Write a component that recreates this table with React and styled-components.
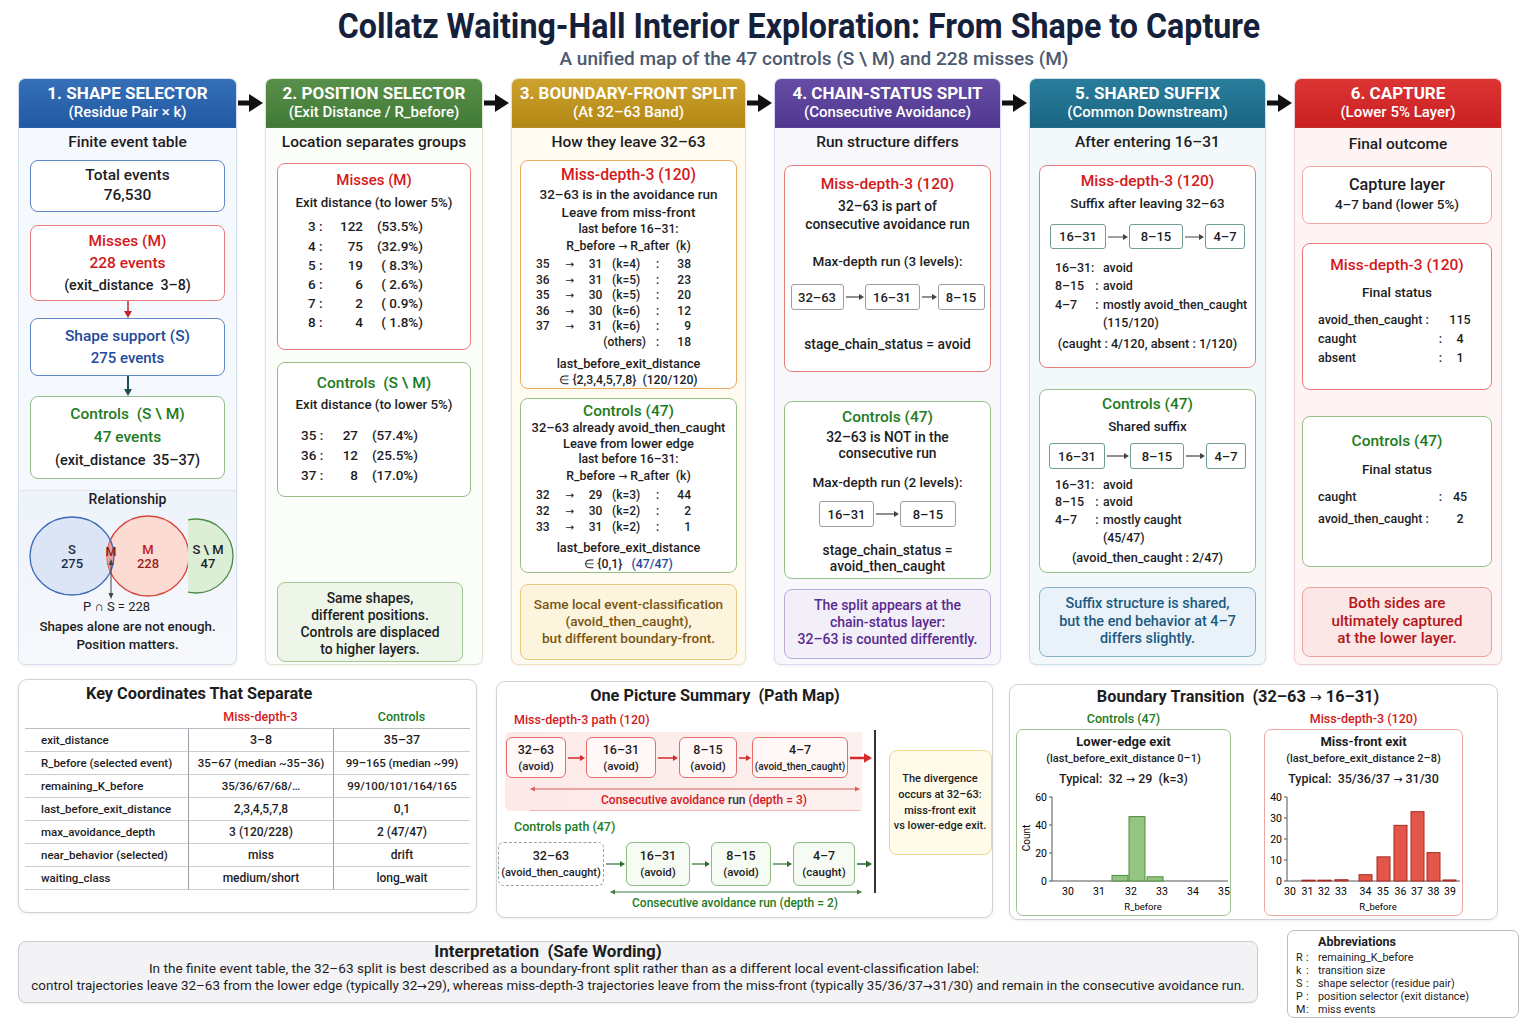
import React from 'react';
import styled, { createGlobalStyle } from 'styled-components';

const RED = '#d3191c';
const GREEN = '#1e7b21';
const BLUE = '#1f4b9b';
const INK = '#1d1d1f';

const RED_BD = '#e97b7b';
const GREEN_BD = '#96bf88';
const BLUE_BD = '#5d87c7';
const ORANGE_BD = '#eaaa62';

const GlobalStyle = createGlobalStyle`
  html, body { margin: 0; padding: 0; background: #fff; }
  body {
    font-family: Roboto, "Noto Sans", "Liberation Sans", sans-serif;
    color: ${INK};
  }
  * { box-sizing: border-box; }
`;

const Page = styled.div`
  width: 1536px;
  height: 1024px;
  overflow: hidden;
  position: relative;
`;

const Title = styled.h1`
  margin: 0;
  padding: 7px 0 0 62px;
  text-align: center;
  font-size: 35px;
  line-height: 40px;
  font-weight: 700;
  color: #15213b;
  white-space: nowrap;
  transform: scaleX(0.92);
  transform-origin: 799px 0;
`;

const Subtitle = styled.div`
  padding-left: 92px;
  text-align: center;
  font-size: 19px;
  line-height: 24px;
  font-weight: 500;
  color: #4b5a70;
  white-space: nowrap;
`;

/* arrow glyph: Roboto's arrow is tiny, DejaVu's reads like the reference */
const Arr = styled.span`
  font-family: "DejaVu Sans", sans-serif;
  font-size: 0.88em;
  font-weight: 400;
`;

/* ---------- six stage columns ---------- */

const Flow = styled.div`
  display: flex;
  margin: 7px 0 0 18px;
  height: 587px;
`;

const Column = styled.div`
  width: ${p => p.$w}px;
  flex: none;
  display: flex;
  flex-direction: column;
  background: ${p => p.$bg};
  border: 1px solid ${p => p.$bd};
  border-radius: 7px;
  overflow: hidden;
  box-shadow: 0 1px 3px rgba(0, 0, 0, 0.06);
`;

const Head = styled.div`
  height: 49px;
  flex: none;
  padding-top: 4px;
  text-align: center;
  color: #fff;
  background: linear-gradient(${p => p.$c2}, ${p => p.$c});
  border-bottom: 1px solid rgba(0, 0, 0, 0.12);
`;

const HeadMain = styled.div`
  font-size: 17px;
  line-height: 20px;
  font-weight: 700;
  white-space: nowrap;
`;

const HeadSub = styled.div`
  font-size: 15px;
  line-height: 19px;
  font-weight: 500;
  white-space: nowrap;
`;

const SubHead = styled.div`
  padding-top: ${p => p.$pt || 3}px;
  text-align: center;
  font-size: 15.5px;
  line-height: 22px;
  font-weight: 500;
  white-space: nowrap;
`;

const Body = styled.div`
  flex: 1;
  display: flex;
  flex-direction: column;
  padding: 0 ${p => p.$pr ?? p.$px}px 0 ${p => p.$px}px;
`;

const Box = styled.div`
  flex: none;
  margin-top: ${p => p.$mt || 0}px;
  margin-right: ${p => p.$mr || 0}px;
  height: ${p => p.$h}px;
  padding-top: ${p => p.$pt || 0}px;
  border: 1.5px solid ${p => p.$bd};
  background: ${p => p.$bg || '#fff'};
  border-radius: 8px;
  display: flex;
  flex-direction: column;
  align-items: center;
`;

const Txt = styled.div`
  font-size: ${p => p.$s || 12.5}px;
  line-height: ${p => p.$lh || 18}px;
  font-weight: ${p => p.$w || 500};
  color: ${p => p.$c || INK};
  margin-top: ${p => p.$mt || 0}px;
  padding-right: ${p => p.$pr || 0}px;
  text-align: center;
  white-space: nowrap;
`;

const Accent = styled.span`
  color: ${p => p.$c};
`;

const DownArrowWrap = styled.div`
  height: ${p => p.$h}px;
  display: flex;
  justify-content: center;
`;

const DownArrow = ({ h, c, sw }) => (
  <DownArrowWrap $h={h}>
    <svg width="12" height={h} viewBox={`0 0 12 ${h}`}>
      <line x1="6" y1="0" x2="6" y2={h - 4} stroke={c} strokeWidth={sw} />
      <polygon points={`6,${h} 2,${h - 7} 10,${h - 7}`} fill={c} />
    </svg>
  </DownArrowWrap>
);

const FlowArrowWrap = styled.div`
  width: 28px;
  flex: none;
  padding-top: 15px;
`;

const FlowArrow = () => (
  <FlowArrowWrap>
    <svg width="28" height="20" viewBox="0 0 28 20">
      <rect x="1" y="7.5" width="14" height="5" fill="#111" />
      <polygon points="12,1 26,10 12,19" fill="#111" />
    </svg>
  </FlowArrowWrap>
);

const Rel = styled.div`
  margin: 11px -11px 0;
  height: 172px;
  background: linear-gradient(#eef3fa, #f6f8fc);
  border-top: 1px solid #dfe6f1;
  display: flex;
  flex-direction: column;
  align-items: center;
`;

const Venn = () => (
  <svg width="219" height="92" viewBox="0 0 219 92">
    <defs>
      <clipPath id="clipS">
        <ellipse cx="54" cy="49" rx="42" ry="39" />
      </clipPath>
      <clipPath id="clipRight">
        <rect x="170" y="0" width="60" height="92" />
      </clipPath>
    </defs>
    <ellipse cx="54" cy="49" rx="42" ry="39" fill="#dbe5f6" />
    <ellipse cx="130" cy="49" rx="41" ry="40" fill="#fcdcd2" stroke="#d9443c" strokeWidth="1.3" />
    <ellipse cx="130" cy="49" rx="41" ry="40" fill="#e6a3a0" clipPath="url(#clipS)" />
    <ellipse cx="54" cy="49" rx="42" ry="39" fill="none" stroke="#3b68b8" strokeWidth="1.3" />
    <g clipPath="url(#clipRight)">
      <circle cx="178" cy="49" r="37" fill="#dcefd6" stroke="#4b8c45" strokeWidth="1.3" />
    </g>
    <g fontSize="13" fontWeight="500" textAnchor="middle">
      <text x="54" y="46.5" fill="#1d2a44">S</text>
      <text x="54" y="61" fill="#1d2a44">275</text>
      <text x="130" y="46.5" fill="#c0201a">M</text>
      <text x="130" y="61" fill="#9a1f18">228</text>
      <text x="190" y="46.5" fill="#1d1d1f">S \ M</text>
      <text x="190" y="61" fill="#1d1d1f">47</text>
      <text x="93" y="48.5" fill="#8a1a1a" fontSize="12.5">M</text>
    </g>
    <line x1="93" y1="56" x2="93" y2="88" stroke="#444" strokeWidth="1" />
    <polygon points="93,52 90.5,58 95.5,58" fill="#444" />
    <polygon points="93,92 90.5,86 95.5,86" fill="#444" />
  </svg>
);

/* exit-distance tables of column 2 */
const ExitRows = styled.div`
  align-self: stretch;
  margin-top: ${p => p.$mt || 0}px;
  padding-left: ${p => p.$pl}px;
  display: grid;
  grid-template-columns: ${p => p.$cols};
  grid-auto-rows: ${p => p.$lh}px;
  line-height: ${p => p.$lh}px;
  font-size: 13.5px;
  font-weight: 500;
  white-space: pre;
`;

const Cell = styled.span`
  text-align: ${p => p.$a || 'left'};
  grid-column: ${p => (p.$span ? `span ${p.$span}` : 'auto')};
`;

/* R_before -> R_after tables of column 3 */
const ArrRows = styled.div`
  align-self: stretch;
  margin-top: ${p => p.$mt || 0}px;
  padding-left: 15px;
  display: grid;
  grid-template-columns: 25px 18px 33px 34px 23px 22px;
  grid-auto-rows: ${p => p.$lh}px;
  line-height: ${p => p.$lh}px;
  font-size: 12px;
  font-weight: 500;
  white-space: nowrap;
`;

const ArrRow = ({ a, b, k, n }) => (
  <>
    <Cell>{a}</Cell>
    <Cell $a="center"><Arr>→</Arr></Cell>
    <Cell $a="center">{b}</Cell>
    <Cell>(k={k})</Cell>
    <Cell $a="center">:</Cell>
    <Cell $a="right">{n}</Cell>
  </>
);

/* chains of band boxes */
const Chain = styled.div`
  margin-top: ${p => p.$mt || 0}px;
  height: ${p => p.$h}px;
  display: flex;
  align-items: center;
  justify-content: center;
  flex: none;
`;

const Band = styled.div`
  width: ${p => p.$w}px;
  height: 100%;
  border: 1.3px solid ${p => p.$bd};
  border-radius: 3px;
  background: #fff;
  display: flex;
  align-items: center;
  justify-content: center;
  font-size: 13px;
  font-weight: 500;
`;

const SmallArrow = ({ w = 20, c = '#444', sw = 1.2, head = 5 }) => (
  <svg width={w} height="14" viewBox={`0 0 ${w} 14`} style={{ flex: 'none' }}>
    <line x1="2" y1="7" x2={w - 3} y2="7" stroke={c} strokeWidth={sw} />
    <polygon points={`${w - 1},7 ${w - 1 - head},${7 - head * 0.6} ${w - 1 - head},${7 + head * 0.6}`} fill={c} />
  </svg>
);

/* status list of column 5 */
const SList = styled.div`
  align-self: stretch;
  margin-top: ${p => p.$mt || 0}px;
  padding-left: 15px;
  display: grid;
  grid-template-columns: 36px 12px auto;
  grid-auto-rows: ${p => p.$lh}px;
  line-height: ${p => p.$lh}px;
  font-size: 12.4px;
  font-weight: 500;
  white-space: nowrap;
`;

/* final status rows of column 6 */
const FRows = styled.div`
  align-self: stretch;
  margin-top: ${p => p.$mt || 0}px;
  padding-left: 15px;
  display: grid;
  grid-template-columns: 114px 10px 36px;
  grid-auto-rows: ${p => p.$lh}px;
  line-height: ${p => p.$lh}px;
  font-size: 12.5px;
  font-weight: 500;
  white-space: nowrap;
`;

/* ---------- bottom panels ---------- */

const BottomRow = styled.div`
  display: flex;
  align-items: flex-start;
  margin: 14px 0 0 18px;
`;

const Panel = styled.div`
  flex: none;
  width: ${p => p.$w}px;
  height: ${p => p.$h}px;
  margin-top: ${p => p.$mt || 0}px;
  margin-left: ${p => p.$ml || 0}px;
  border: 1px solid #cfd2d8;
  border-radius: 9px;
  background: #fff;
  box-shadow: 0 1px 3px rgba(0, 0, 0, 0.07);
`;

const PanelTitle = styled.div`
  padding: ${p => p.$pt || 4}px ${p => p.$pr || 0}px 0 ${p => p.$pl || 0}px;
  text-align: ${p => p.$align || 'center'};
  font-size: 16.3px;
  line-height: 20px;
  font-weight: 700;
  white-space: nowrap;
`;

const KTable = styled.div`
  margin: 3px 6px 0;
  display: grid;
  grid-template-columns: 163px 145px 137px;
`;

const KHead = styled.div`
  height: 22px;
  line-height: 20px;
  text-align: center;
  font-size: 12.5px;
  font-weight: 500;
  color: ${p => p.$c};
  border-bottom: 1px solid #b9bcc2;
`;

const KCell = styled.div`
  height: 23px;
  line-height: 22px;
  font-size: ${p => p.$s || 11.5}px;
  font-weight: 500;
  white-space: nowrap;
  border-bottom: 1px solid #c9ccd1;
  border-left: ${p => (p.$first ? 'none' : '1px solid #9a9ea6')};
  text-align: ${p => (p.$first ? 'left' : 'center')};
  padding-left: ${p => (p.$first ? 16 : 0)}px;
`;

const PMBody = styled.div`
  display: flex;
  align-items: flex-start;
`;

const PMDiagram = styled.div`
  width: 376px;
  margin-left: 1px;
  flex: none;
`;

const PathLabel = styled.div`
  margin-top: ${p => p.$mt}px;
  padding-left: 16px;
  font-size: 12.5px;
  line-height: 16px;
  font-weight: 500;
  color: ${p => p.$c};
`;

const RedArea = styled.div`
  margin: 4px 0 0 7px;
  width: 368px;
  padding-top: 5px;
  border-radius: 6px;
  background: linear-gradient(to right, rgba(251, 226, 224, 0.75) 0, rgba(252, 236, 234, 0.75) 357px, transparent 357px);
`;

const NodeRow = styled.div`
  display: flex;
  align-items: center;
  margin-top: ${p => p.$mt || 0}px;
  margin-left: ${p => p.$ml || 0}px;
  height: ${p => p.$h}px;
`;

const PNode = styled.div`
  flex: none;
  width: ${p => p.$w}px;
  height: 100%;
  border: 1.4px ${p => (p.$dashed ? 'dashed' : 'solid')} ${p => p.$bd};
  background: ${p => p.$bg};
  border-radius: 6px;
  display: flex;
  flex-direction: column;
  align-items: center;
  justify-content: center;
  white-space: nowrap;
`;

const NodeTop = styled.div`
  font-size: 12.5px;
  line-height: 17px;
  font-weight: 500;
`;

const NodeSub = styled.div`
  font-size: ${p => p.$s || 11.5}px;
  line-height: 17px;
  font-weight: 500;
`;

const RangeWrap = styled.div`
  margin: ${p => p.$mt}px 0 0 ${p => p.$ml}px;
  height: 8px;
  display: flex;
`;

const Range = ({ w, ml, mt, c }) => (
  <RangeWrap $ml={ml} $mt={mt}>
    <svg width={w} height="8" viewBox={`0 0 ${w} 8`}>
      <line x1="1" y1="4" x2={w - 1} y2="4" stroke={c} strokeWidth="1" />
      <polygon points={`0,4 5,1.5 5,6.5`} fill={c} />
      <polygon points={`${w},4 ${w - 5},1.5 ${w - 5},6.5`} fill={c} />
    </svg>
  </RangeWrap>
);

const RangeLabel = styled.div`
  padding-left: ${p => p.$pl}px;
  text-align: center;
  font-size: 12px;
  line-height: 14px;
  font-weight: 500;
  color: ${p => p.$c};
  white-space: nowrap;
`;

const RangeLine = styled.div`
  margin: 3px 0 0 25px;
  width: 330px;
  height: 1px;
  background: #f0b4b4;
`;

const Divider = styled.div`
  flex: none;
  width: 1.5px;
  height: 163px;
  margin-top: 24px;
  background: #333;
`;

const SideNote = styled.div`
  flex: none;
  width: 103px;
  height: 105px;
  margin: 44px 0 0 13px;
  border: 1.3px solid #efd58c;
  border-radius: 8px;
  background: #fffbea;
  display: flex;
  flex-direction: column;
  justify-content: center;
  align-items: center;
  font-size: 11px;
  line-height: 15.6px;
  font-weight: 500;
  white-space: nowrap;
`;

const ChartLabels = styled.div`
  margin: 4px 0 0 6px;
  display: grid;
  grid-template-columns: 215px 199px;
  column-gap: 33px;
`;

const ChartLabel = styled.div`
  text-align: center;
  font-size: 12.5px;
  line-height: 16px;
  font-weight: 500;
  color: ${p => p.$c};
`;

const ChartCards = styled.div`
  margin: 2px 0 0 6px;
  display: grid;
  grid-template-columns: 215px 199px;
  column-gap: 33px;
`;

const ChartCard = styled.div`
  height: 187px;
  border: 1.3px solid ${p => p.$bd};
  border-radius: 7px;
  padding-top: 3px;
  display: flex;
  flex-direction: column;
  align-items: center;
`;

const GreenChart = () => {
  const ticks = [[60, 4], [40, 32], [20, 60], [0, 88]];
  const xl = [[30, 51], [31, 82], [32, 114], [33, 145], [34, 176], [35, 207]];
  const bars = [[95, 4], [112, 46], [130, 3]];
  return (
    <svg width="213" height="124" viewBox="0 0 213 124">
      <g transform="translate(0 3)">
        <line x1="35" y1="4" x2="35" y2="88" stroke="#555" strokeWidth="1" />
        <line x1="35" y1="88" x2="211" y2="88" stroke="#555" strokeWidth="1" />
        {ticks.map(([v, y]) => (
          <g key={v}>
            <line x1="32" y1={y} x2="35" y2={y} stroke="#555" />
            <text x="30" y={y + 3.5} textAnchor="end" fontSize="10.5">{v}</text>
          </g>
        ))}
        {bars.map(([x, v]) => (
          <rect key={x} x={x} y={88 - v * 1.4} width="16" height={v * 1.4} fill="#94c582" stroke="#4f8b42" strokeWidth="1" />
        ))}
        {xl.map(([v, x]) => (
          <text key={v} x={x} y="101.5" textAnchor="middle" fontSize="10.5">{v}</text>
        ))}
        <text x="126" y="117" textAnchor="middle" fontSize="9.5">R_before</text>
        <text x="13" y="45" textAnchor="middle" fontSize="10" transform="rotate(-90 13 45)">Count</text>
      </g>
    </svg>
  );
};

const RedChart = () => {
  const ticks = [[40, 4], [30, 25], [20, 46], [10, 67], [0, 88]];
  const xl = [[30, 25], [31, 42.5], [32, 59], [33, 76], [34, 100.5], [35, 118], [36, 135.5], [37, 152], [38, 168.5], [39, 185]];
  const bars = [[37, 0.4], [53, 0.4], [70, 0.6], [94, 3], [112, 11.5], [129, 26.5], [146, 33], [162, 13.5], [178, 0.5]];
  return (
    <svg width="197" height="124" viewBox="0 0 197 124">
      <g transform="translate(0 3)">
        <line x1="22" y1="4" x2="22" y2="88" stroke="#555" strokeWidth="1" />
        <line x1="22" y1="88" x2="195" y2="88" stroke="#555" strokeWidth="1" />
        {ticks.map(([v, y]) => (
          <g key={v}>
            <line x1="19" y1={y} x2="22" y2={y} stroke="#555" />
            <text x="17" y={y + 3.5} textAnchor="end" fontSize="10.5">{v}</text>
          </g>
        ))}
        {bars.map(([x, v]) => (
          <rect key={x} x={x} y={88 - v * 2.1} width="13" height={v * 2.1} fill="#e2574a" stroke="#a82a20" strokeWidth="1" />
        ))}
        {xl.map(([v, x]) => (
          <text key={v} x={x} y="101.5" textAnchor="middle" fontSize="10.5">{v}</text>
        ))}
        <text x="113" y="117" textAnchor="middle" fontSize="9.5">R_before</text>
      </g>
    </svg>
  );
};

const FootRow = styled.div`
  display: flex;
  align-items: flex-start;
  margin: 10px 0 0 18px;
`;

const Interp = styled.div`
  flex: none;
  width: 1240px;
  height: 62px;
  margin-top: 11px;
  border: 1px solid #c9ccd2;
  border-radius: 8px;
  background: #f3f3f5;
  box-shadow: 0 1px 2px rgba(0, 0, 0, 0.06);
  text-align: center;
  white-space: nowrap;
`;

const InterpTitle = styled.div`
  padding-right: 180px;
  font-size: 17px;
  line-height: 18px;
  font-weight: 700;
`;

const InterpLine = styled.div`
  padding-right: ${p => p.$pr || 0}px;
  font-size: ${p => p.$s}px;
  line-height: 17px;
`;

const Abbrev = styled.div`
  flex: none;
  width: 232px;
  height: 88px;
  margin-left: 29px;
  border: 1px solid #b9bcc3;
  border-radius: 7px;
  background: #fff;
  padding: 3px 0 0 8px;
`;

const AbbrevTitle = styled.div`
  padding-left: 22px;
  font-size: 12.5px;
  line-height: 15px;
  font-weight: 700;
`;

const AbbrevList = styled.div`
  margin-top: 2px;
  display: grid;
  grid-template-columns: 10px 12px auto;
  grid-auto-rows: 13px;
  line-height: 13px;
  font-size: 10.8px;
  white-space: nowrap;
`;

const keyRows = [
  ['exit_distance', '3–8', '35–37', 12.5],
  ['R_before (selected event)', '35–67 (median ~35–36)', '99–165 (median ~99)'],
  ['remaining_K_before', '35/36/67/68/…', '99/100/101/164/165'],
  ['last_before_exit_distance', '2,3,4,5,7,8', '0,1', 12],
  ['max_avoidance_depth', '3 (120/228)', '2 (47/47)', 12],
  ['near_behavior (selected)', 'miss', 'drift', 12],
  ['waiting_class', 'medium/short', 'long_wait', 12],
];

const abbrevs = [
  ['R', 'remaining_K_before'],
  ['k', 'transition size'],
  ['S', 'shape selector (residue pair)'],
  ['P', 'position selector (exit distance)'],
  ['M', 'miss events'],
];

const App = () => {
  return (
    <Page>
      <GlobalStyle />
      <Title>Collatz Waiting-Hall Interior Exploration: From Shape to Capture</Title>
      <Subtitle>A unified map of the 47 controls (S \ M) and 228 misses (M)</Subtitle>

      <Flow>
        {/* 1 */}
        <Column $w={219} $bg="#f5f8fd" $bd="#d3ddee">
          <Head $c="#2259a3" $c2="#3470b8">
            <HeadMain>1. SHAPE SELECTOR</HeadMain>
            <HeadSub>(Residue Pair × k)</HeadSub>
          </Head>
          <SubHead>Finite event table</SubHead>
          <Body $px={11}>
            <Box $mt={7} $h={52} $pt={4} $bd={BLUE_BD}>
              <Txt $s={15.5} $lh={20}>Total events</Txt>
              <Txt $s={15.5} $lh={20}>76,530</Txt>
            </Box>
            <Box $mt={13} $h={76} $pt={4} $bd={RED_BD}>
              <Txt $s={15.5} $lh={22} $c={RED}>Misses (M)</Txt>
              <Txt $s={15.5} $lh={22} $c={RED}>228 events</Txt>
              <Txt $s={14.3} $lh={22}>(exit_distance&nbsp; 3–8)</Txt>
            </Box>
            <DownArrow h={17} c="#c0282a" sw={1.5} />
            <Box $h={58} $pt={6} $bd={BLUE_BD}>
              <Txt $s={15.5} $lh={22} $c={BLUE}>Shape support (S)</Txt>
              <Txt $s={15} $lh={22} $c={BLUE}>275 events</Txt>
            </Box>
            <DownArrow h={20} c="#1e4b4f" sw={2} />
            <Box $h={83} $pt={5.5} $bd={GREEN_BD}>
              <Txt $s={15.5} $lh={23} $c={GREEN}>Controls&nbsp; (S \ M)</Txt>
              <Txt $s={15.5} $lh={23} $c={GREEN}>47 events</Txt>
              <Txt $s={14.5} $lh={23}>(exit_distance&nbsp; 35–37)</Txt>
            </Box>
            <Rel>
              <Txt $s={14} $lh={16}>Relationship</Txt>
              <Venn />
              <Txt $s={13} $lh={16} $w={400} $pr={22}>P ∩ S = 228</Txt>
              <Txt $s={13.3} $lh={18} $mt={3}>Shapes alone are not enough.</Txt>
              <Txt $s={13.3} $lh={18}>Position matters.</Txt>
            </Rel>
          </Body>
        </Column>

        <FlowArrow />

        {/* 2 */}
        <Column $w={218} $bg="#fbfdf9" $bd="#dbe6d3">
          <Head $c="#417a36" $c2="#58904a">
            <HeadMain>2. POSITION SELECTOR</HeadMain>
            <HeadSub>(Exit Distance / R_before)</HeadSub>
          </Head>
          <SubHead>Location separates groups</SubHead>
          <Body $px={11}>
            <Box $mt={10} $h={187} $pt={6} $bd={RED_BD}>
              <Txt $s={15} $lh={20} $c={RED}>Misses (M)</Txt>
              <Txt $s={13.3} $lh={20} $mt={3}>Exit distance (to lower 5%)</Txt>
              <ExitRows $mt={4.4} $lh={19.2} $pl={30} $cols="24px 31px 8px 52px">
                {[['3 :', '122', '(53.5%)'], ['4 :', '75', '(32.9%)'], ['5 :', '19', '( 8.3%)'], ['6 :', '6', '( 2.6%)'], ['7 :', '2', '( 0.9%)'], ['8 :', '4', '( 1.8%)']].map(r => (
                  <React.Fragment key={r[0]}>
                    <Cell>{r[0]}</Cell>
                    <Cell $a="right">{r[1]}</Cell>
                    <Cell />
                    <Cell $a="right">{r[2]}</Cell>
                  </React.Fragment>
                ))}
              </ExitRows>
            </Box>
            <Box $mt={12} $h={135} $pt={10} $bd={GREEN_BD}>
              <Txt $s={15.5} $lh={20} $c={GREEN}>Controls&nbsp; (S \ M)</Txt>
              <Txt $s={13.3} $lh={20} $mt={2}>Exit distance (to lower 5%)</Txt>
              <ExitRows $mt={10} $lh={20} $pl={23} $cols="30px 27px 9px 51px">
                {[['35 :', '27', '(57.4%)'], ['36 :', '12', '(25.5%)'], ['37 :', '8', '(17.0%)']].map(r => (
                  <React.Fragment key={r[0]}>
                    <Cell>{r[0]}</Cell>
                    <Cell $a="right">{r[1]}</Cell>
                    <Cell />
                    <Cell $a="right">{r[2]}</Cell>
                  </React.Fragment>
                ))}
              </ExitRows>
            </Box>
            <Box $mt={85} $h={80} $mr={8} $pt={6.5} $bd="#a2c994" $bg="#eef6ea">
              <Txt $s={13.9} $lh={17}>Same shapes,</Txt>
              <Txt $s={13.9} $lh={17}>different positions.</Txt>
              <Txt $s={13.9} $lh={17}>Controls are displaced</Txt>
              <Txt $s={13.9} $lh={17}>to higher layers.</Txt>
            </Box>
          </Body>
        </Column>

        <FlowArrow />

        {/* 3 */}
        <Column $w={235} $bg="#fffbf1" $bd="#efe0b8">
          <Head $c="#b38714" $c2="#cda22e">
            <HeadMain>3. BOUNDARY-FRONT SPLIT</HeadMain>
            <HeadSub>(At 32–63 Band)</HeadSub>
          </Head>
          <SubHead>How they leave 32–63</SubHead>
          <Body $px={8}>
            <Box $mt={7} $h={229} $pt={5} $bd={ORANGE_BD}>
              <Txt $s={15.7} $lh={18} $c={RED}>Miss-depth-3 (120)</Txt>
              <Txt $s={13.5} $lh={18} $mt={1}>32–63 is in the avoidance run</Txt>
              <Txt $s={13.5} $lh={18}>Leave from miss-front</Txt>
              <Txt $s={12.2} $lh={17}>last before 16–31:</Txt>
              <Txt $s={12.3} $lh={16.5}>R_before <Arr>→</Arr> R_after&nbsp; (k)</Txt>
              <ArrRows $mt={1.5} $lh={15.6}>
                <ArrRow a="35" b="31" k="4" n="38" />
                <ArrRow a="36" b="31" k="5" n="23" />
                <ArrRow a="35" b="30" k="5" n="20" />
                <ArrRow a="36" b="30" k="6" n="12" />
                <ArrRow a="37" b="31" k="6" n="9" />
                <Cell $span={4} $a="right">(others)</Cell>
                <Cell $a="center">:</Cell>
                <Cell $a="right">18</Cell>
              </ArrRows>
              <Txt $s={12.7} $lh={17} $mt={4.5}>last_before_exit_distance</Txt>
              <Txt $s={12.3} $lh={17}>∈ {'{2,3,4,5,7,8}'}&nbsp; (120/120)</Txt>
            </Box>
            <Box $mt={9} $h={175} $pt={3} $bd={GREEN_BD}>
              <Txt $s={15.5} $lh={18} $c={GREEN}>Controls (47)</Txt>
              <Txt $s={12.9} $lh={16}>32–63 already avoid_then_caught</Txt>
              <Txt $s={12.9} $lh={15}>Leave from lower edge</Txt>
              <Txt $s={12.2} $lh={17}>last before 16–31:</Txt>
              <Txt $s={12.3} $lh={16}>R_before <Arr>→</Arr> R_after&nbsp; (k)</Txt>
              <ArrRows $mt={2} $lh={16}>
                <ArrRow a="32" b="29" k="3" n="44" />
                <ArrRow a="32" b="30" k="2" n="2" />
                <ArrRow a="33" b="31" k="2" n="1" />
              </ArrRows>
              <Txt $s={12.7} $lh={16} $mt={5}>last_before_exit_distance</Txt>
              <Txt $s={12.3} $lh={16}>∈ {'{0,1}'}&nbsp;&nbsp; <Accent $c={BLUE}>(47/47)</Accent></Txt>
            </Box>
            <Box $mt={11} $h={76} $pt={10.5} $bd="#e9c77c" $bg="#fdf4dd">
              <Txt $s={13.6} $lh={17} $c="#7a5512">Same local event-classification</Txt>
              <Txt $s={13.6} $lh={17} $c="#7a5512">(avoid_then_caught),</Txt>
              <Txt $s={13.6} $lh={17} $c="#7a5512">but different boundary-front.</Txt>
            </Box>
          </Body>
        </Column>

        <FlowArrow />

        {/* 4 */}
        <Column $w={227} $bg="#f8f7fc" $bd="#dedaee">
          <Head $c="#503891" $c2="#664ca4">
            <HeadMain>4. CHAIN-STATUS SPLIT</HeadMain>
            <HeadSub>(Consecutive Avoidance)</HeadSub>
          </Head>
          <SubHead>Run structure differs</SubHead>
          <Body $px={9}>
            <Box $mt={12} $h={207} $pt={8} $bd={RED_BD}>
              <Txt $s={15.5} $lh={20} $c={RED}>Miss-depth-3 (120)</Txt>
              <Txt $s={13.8} $lh={18} $mt={3}>32–63 is part of</Txt>
              <Txt $s={13.8} $lh={18}>consecutive avoidance run</Txt>
              <Txt $s={13.5} $lh={18} $mt={19}>Max-depth run (3 levels):</Txt>
              <Chain $mt={14} $h={26}>
                <Band $w={53} $bd="#9d9d9d">32–63</Band>
                <SmallArrow w={21} c="#444" />
                <Band $w={55} $bd="#9d9d9d">16–31</Band>
                <SmallArrow w={18} c="#444" />
                <Band $w={47} $bd="#9d9d9d">8–15</Band>
              </Chain>
              <Txt $s={13.8} $lh={18} $mt={25}>stage_chain_status = avoid</Txt>
            </Box>
            <Box $mt={29} $h={178} $pt={6} $bd={GREEN_BD}>
              <Txt $s={15.5} $lh={18} $c={GREEN}>Controls (47)</Txt>
              <Txt $s={13.8} $lh={16} $mt={3}>32–63 is NOT in the</Txt>
              <Txt $s={13.8} $lh={16}>consecutive run</Txt>
              <Txt $s={13.5} $lh={18} $mt={12}>Max-depth run (2 levels):</Txt>
              <Chain $mt={10} $h={26}>
                <Band $w={55} $bd="#9d9d9d">16–31</Band>
                <SmallArrow w={26} c="#444" />
                <Band $w={56} $bd="#9d9d9d">8–15</Band>
              </Chain>
              <Txt $s={13.8} $lh={16} $mt={15}>stage_chain_status =</Txt>
              <Txt $s={13.8} $lh={16}>avoid_then_caught</Txt>
            </Box>
            <Box $mt={10} $h={70} $pt={6.5} $bd="#bba9dc" $bg="#f3eff9">
              <Txt $s={14} $lh={17} $c="#5a2b90">The split appears at the</Txt>
              <Txt $s={14} $lh={17} $c="#5a2b90">chain-status layer:</Txt>
              <Txt $s={14} $lh={17} $c="#5a2b90">32–63 is counted differently.</Txt>
            </Box>
          </Body>
        </Column>

        <FlowArrow />

        {/* 5 */}
        <Column $w={237} $bg="#f3f8fb" $bd="#cfdfea">
          <Head $c="#1a6683" $c2="#2a7d9c">
            <HeadMain>5. SHARED SUFFIX</HeadMain>
            <HeadSub>(Common Downstream)</HeadSub>
          </Head>
          <SubHead>After entering 16–31</SubHead>
          <Body $px={9}>
            <Box $mt={12} $h={203} $pt={6} $bd={RED_BD}>
              <Txt $s={15.5} $lh={18} $c={RED}>Miss-depth-3 (120)</Txt>
              <Txt $s={13.4} $lh={18} $mt={5}>Suffix after leaving 32–63</Txt>
              <Chain $mt={11} $h={25}>
                <Band $w={56} $bd="#6f9b96">16–31</Band>
                <SmallArrow w={23} c="#444" />
                <Band $w={54} $bd="#6f9b96">8–15</Band>
                <SmallArrow w={22} c="#444" />
                <Band $w={40} $bd="#6f9b96">4–7</Band>
              </Chain>
              <SList $mt={10} $lh={18.3}>
                <Cell>16–31</Cell><Cell>:</Cell><Cell>avoid</Cell>
                <Cell>8–15</Cell><Cell $a="center">:</Cell><Cell>avoid</Cell>
                <Cell>4–7</Cell><Cell $a="center">:</Cell><Cell>mostly avoid_then_caught</Cell>
                <Cell /><Cell /><Cell>(115/120)</Cell>
              </SList>
              <Txt $s={12.7} $lh={18} $mt={3}>(caught : 4/120, absent : 1/120)</Txt>
            </Box>
            <Box $mt={21} $h={184} $pt={5} $bd={GREEN_BD}>
              <Txt $s={15.5} $lh={18} $c={GREEN}>Controls (47)</Txt>
              <Txt $s={13.4} $lh={18} $mt={5}>Shared suffix</Txt>
              <Chain $mt={7} $h={26}>
                <Band $w={56} $bd="#6f9b96">16–31</Band>
                <SmallArrow w={25} c="#444" />
                <Band $w={54} $bd="#6f9b96">8–15</Band>
                <SmallArrow w={22} c="#444" />
                <Band $w={40} $bd="#6f9b96">4–7</Band>
              </Chain>
              <SList $mt={6.5} $lh={17.7}>
                <Cell>16–31</Cell><Cell>:</Cell><Cell>avoid</Cell>
                <Cell>8–15</Cell><Cell $a="center">:</Cell><Cell>avoid</Cell>
                <Cell>4–7</Cell><Cell $a="center">:</Cell><Cell>mostly caught</Cell>
                <Cell /><Cell /><Cell>(45/47)</Cell>
              </SList>
              <Txt $s={12.7} $lh={18} $mt={2.5}>(avoid_then_caught : 2/47)</Txt>
            </Box>
            <Box $mt={14} $h={70} $pt={7} $bd="#84b3cb" $bg="#e9f2f8">
              <Txt $s={14.4} $lh={17.5} $c="#1b5a82">Suffix structure is shared,</Txt>
              <Txt $s={14.4} $lh={17.5} $c="#1b5a82">but the end behavior at 4–7</Txt>
              <Txt $s={14.4} $lh={17.5} $c="#1b5a82">differs slightly.</Txt>
            </Box>
          </Body>
        </Column>

        <FlowArrow />

        {/* 6 */}
        <Column $w={208} $bg="#fdf4f3" $bd="#f2d0cf">
          <Head $c="#c91f22" $c2="#dc3533">
            <HeadMain>6. CAPTURE</HeadMain>
            <HeadSub>(Lower 5% Layer)</HeadSub>
          </Head>
          <SubHead $pt={5}>Final outcome</SubHead>
          <Body $px={7} $pr={9}>
            <Box $mt={11} $h={58} $pt={8} $bd="#f0a9a8">
              <Txt $s={16.2} $lh={20}>Capture layer</Txt>
              <Txt $s={13.5} $lh={18}>4–7 band (lower 5%)</Txt>
            </Box>
            <Box $mt={19} $h={147} $pt={11} $bd={RED_BD}>
              <Txt $s={15.5} $lh={20} $c={RED}>Miss-depth-3 (120)</Txt>
              <Txt $s={13.5} $lh={18} $mt={8}>Final status</Txt>
              <FRows $mt={8.5} $lh={19}>
                <Cell>avoid_then_caught :</Cell><Cell /><Cell $a="center">115</Cell>
                <Cell>caught</Cell><Cell $a="right">:</Cell><Cell $a="center">4</Cell>
                <Cell>absent</Cell><Cell $a="right">:</Cell><Cell $a="center">1</Cell>
              </FRows>
            </Box>
            <Box $mt={26} $h={151} $pt={14} $bd={GREEN_BD}>
              <Txt $s={15.5} $lh={20} $c={GREEN}>Controls (47)</Txt>
              <Txt $s={13.5} $lh={18} $mt={9}>Final status</Txt>
              <FRows $mt={8} $lh={22}>
                <Cell>caught</Cell><Cell $a="right">:</Cell><Cell $a="center">45</Cell>
                <Cell>avoid_then_caught :</Cell><Cell /><Cell $a="center">2</Cell>
              </FRows>
            </Box>
            <Box $mt={20} $h={70} $pt={7} $bd="#efa19e" $bg="#fbe7e5">
              <Txt $s={15.2} $lh={17.5} $c="#b4161b">Both sides are</Txt>
              <Txt $s={15.2} $lh={17.5} $c="#b4161b">ultimately captured</Txt>
              <Txt $s={15.2} $lh={17.5} $c="#b4161b">at the lower layer.</Txt>
            </Box>
          </Body>
        </Column>
      </Flow>

      <BottomRow>
        <Panel $w={459} $h={234}>
          <PanelTitle $align="left" $pl={67}>Key Coordinates That Separate</PanelTitle>
          <KTable>
            <KHead />
            <KHead $c={RED}>Miss-depth-3</KHead>
            <KHead $c={GREEN}>Controls</KHead>
            {keyRows.map(r => (
              <React.Fragment key={r[0]}>
                <KCell $first>{r[0]}</KCell>
                <KCell $s={r[3]}>{r[1]}</KCell>
                <KCell $s={r[3]}>{r[2]}</KCell>
              </React.Fragment>
            ))}
          </KTable>
        </Panel>

        <Panel $w={497} $h={237} $mt={2} $ml={19}>
          <PanelTitle $pr={59}>One Picture Summary&nbsp; (Path Map)</PanelTitle>
          <PMBody>
            <PMDiagram>
              <PathLabel $mt={6} $c={RED}>Miss-depth-3 path (120)</PathLabel>
              <RedArea>
                <NodeRow $ml={1} $h={41}>
                  <PNode $w={60} $bd="#e66b6b" $bg="#fff8f7"><NodeTop>32–63</NodeTop><NodeSub>(avoid)</NodeSub></PNode>
                  <SmallArrow w={20} c="#d42a2a" sw={1.5} />
                  <PNode $w={70} $bd="#e66b6b" $bg="#fff8f7"><NodeTop>16–31</NodeTop><NodeSub>(avoid)</NodeSub></PNode>
                  <SmallArrow w={23} c="#d42a2a" sw={1.5} />
                  <PNode $w={58} $bd="#e66b6b" $bg="#fff8f7"><NodeTop>8–15</NodeTop><NodeSub>(avoid)</NodeSub></PNode>
                  <SmallArrow w={15} c="#d42a2a" sw={1.5} />
                  <PNode $w={96} $bd="#e66b6b" $bg="#fff8f7"><NodeTop>4–7</NodeTop><NodeSub $s={10}>(avoid_then_caught)</NodeSub></PNode>
                  <SmallArrow w={25} c="#d42a2a" sw={2.5} head={8} />
                </NodeRow>
                <Range w={330} ml={25} mt={7} c="#d86060" />
                <RangeLabel $pl={30} $c={RED}>
                  Consecutive avoidance <Accent $c="#333">run</Accent> (depth = 3)
                </RangeLabel>
                <RangeLine />
              </RedArea>
              <PathLabel $mt={8} $c={GREEN}>Controls path (47)</PathLabel>
              <NodeRow $mt={7} $h={44}>
                <PNode $w={106} $bd="#9aa39a" $bg="#fff" $dashed><NodeTop>32–63</NodeTop><NodeSub $s={11}>(avoid_then_caught)</NodeSub></PNode>
                <SmallArrow w={22} c="#2e6b2e" sw={1.2} />
                <PNode $w={64} $bd="#8fbb81" $bg="#f6fbf3"><NodeTop>16–31</NodeTop><NodeSub>(avoid)</NodeSub></PNode>
                <SmallArrow w={21} c="#2e6b2e" sw={1.2} />
                <PNode $w={60} $bd="#8fbb81" $bg="#f6fbf3"><NodeTop>8–15</NodeTop><NodeSub>(avoid)</NodeSub></PNode>
                <SmallArrow w={22} c="#2e6b2e" sw={1.2} />
                <PNode $w={62} $bd="#8fbb81" $bg="#f6fbf3"><NodeTop>4–7</NodeTop><NodeSub>(caught)</NodeSub></PNode>
                <SmallArrow w={18} c="#2e6b2e" sw={1.6} head={6} />
              </NodeRow>
              <Range w={252} ml={112} mt={2} c="#3d7d3d" />
              <RangeLabel $pl={98} $c={GREEN}>Consecutive avoidance run (depth = 2)</RangeLabel>
            </PMDiagram>
            <Divider />
            <SideNote>
              <span>The divergence</span>
              <span>occurs at 32–63:</span>
              <span>miss-front exit</span>
              <span>vs lower-edge exit.</span>
            </SideNote>
          </PMBody>
        </Panel>

        <Panel $w={489} $h={236} $mt={5} $ml={16}>
          <PanelTitle $pt={2} $pr={31}>Boundary Transition&nbsp; (32–63 <Arr>→</Arr> 16–31)</PanelTitle>
          <ChartLabels>
            <ChartLabel $c={GREEN}>Controls (47)</ChartLabel>
            <ChartLabel $c={RED}>Miss-depth-3 (120)</ChartLabel>
          </ChartLabels>
          <ChartCards>
            <ChartCard $bd="#9dc490">
              <Txt $s={13} $lh={17} $w={700}>Lower-edge exit</Txt>
              <Txt $s={11} $lh={17}>(last_before_exit_distance 0–1)</Txt>
              <Txt $s={12.5} $lh={20} $mt={1.5}>Typical:&nbsp; 32 <Arr>→</Arr> 29&nbsp; (k=3)</Txt>
              <GreenChart />
            </ChartCard>
            <ChartCard $bd="#eea6a2">
              <Txt $s={13} $lh={17} $w={700}>Miss-front exit</Txt>
              <Txt $s={11} $lh={17}>(last_before_exit_distance 2–8)</Txt>
              <Txt $s={12.5} $lh={20} $mt={1.5}>Typical:&nbsp; 35/36/37 <Arr>→</Arr> 31/30</Txt>
              <RedChart />
            </ChartCard>
          </ChartCards>
        </Panel>
      </BottomRow>

      <FootRow>
        <Interp>
          <InterpTitle>Interpretation&nbsp; (Safe Wording)</InterpTitle>
          <InterpLine $s={13.6} $pr={148}>
            In the finite event table, the 32–63 split is best described as a boundary-front split rather than as a different local event-classification label:
          </InterpLine>
          <InterpLine $s={13.4}>
            control trajectories leave 32–63 from the lower edge (typically 32<Arr>→</Arr>29), whereas miss-depth-3 trajectories leave from the miss-front (typically 35/36/37<Arr>→</Arr>31/30) and remain in the consecutive avoidance run.
          </InterpLine>
        </Interp>
        <Abbrev>
          <AbbrevTitle>Abbreviations</AbbrevTitle>
          <AbbrevList>
            {abbrevs.map(([k, v]) => (
              <React.Fragment key={k}>
                <span>{k}</span>
                <span>:</span>
                <span>{v}</span>
              </React.Fragment>
            ))}
          </AbbrevList>
        </Abbrev>
      </FootRow>
    </Page>
  );
};

export default App;
